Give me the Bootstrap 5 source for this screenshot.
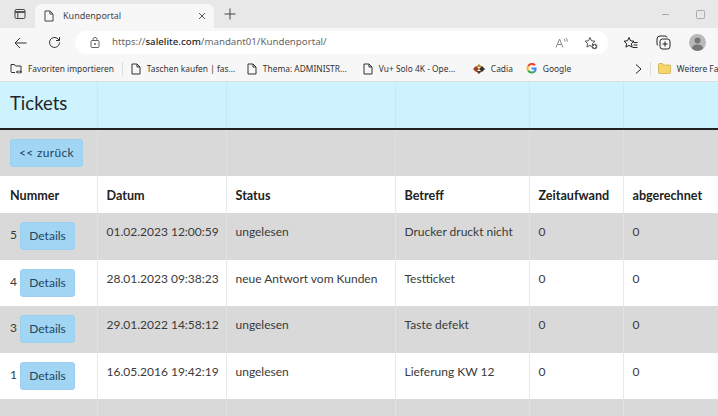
<!DOCTYPE html>
<html lang="de">
<head>
<meta charset="utf-8">
<title>Kundenportal</title>
<link href="https://cdn.jsdelivr.net/npm/bootstrap@5.3.0/dist/css/bootstrap.min.css" rel="stylesheet">
<style>
html,body{margin:0;height:416px;overflow:hidden;background:#fff}
body{font-family:"Noto Sans","Open Sans",sans-serif;font-size:11px;color:#333}
.tabstrip{height:28px;background:#e8e8e8;padding-left:9px}
.win-ico{width:22px;height:28px}
.tab-cell{width:179px;height:24px;margin:4px 0 0 4px;background:#f7f7f7;border-radius:6px 6px 0 0;padding:0 8px 0 9px;font-size:9px;color:#444}
.tab-title{margin-left:9px}
.plus{width:32px;height:28px}
.win-ctl{height:28px;gap:26px;padding-right:13px}
.toolbar{height:29px;background:#f7f7f7;padding:0 0 0 14px}
.navbtn{width:34px}
.addr{width:533px;height:23px;margin-left:14px;background:#fff;border-radius:12px;padding:0 10px 0 15px;font-size:9.7px;color:#666;white-space:nowrap}
.addr b{font-weight:500;color:#222}
.addr svg.lock{margin-right:12px}
.tool-right{gap:18px;margin-left:15px}
.avatar{width:17px;height:17px;border-radius:50%;background:#b9b9b9;overflow:hidden}
.favbar{height:25px;background:#f7f7f7;padding-left:10px;font-size:8.4px;color:#333;white-space:nowrap;border-bottom:1px solid #dedede;overflow:hidden}
.favbar>*{flex-shrink:0}
.fav{gap:6px}
.fav-sep{width:1px;height:14px;background:#ddd}
.fav-sep-start{margin:0 8px}
.fav-a{width:116px}
.fav-b{width:110px}
.fav-c{width:53px}
.fav-d{width:109px}
.fav-sep-end{margin:0 7px 0 8px}
.page-tbl{width:718px;table-layout:fixed;margin:0;font-family:Lato,"Noto Sans",sans-serif;font-size:12px;color:#3a3a3a;border-collapse:collapse;--bs-table-bg:transparent}
.page-tbl td,.page-tbl th{border:0;border-right:1px solid #e9e9e9;padding:10px 9px;vertical-align:top;line-height:18px;box-shadow:none;white-space:nowrap}
.page-tbl td:last-child,.page-tbl th:last-child{border-right:0}
.row-title td{height:47px;background:#cdf3fe;border-bottom:2px solid #222;padding:8px 10px;border-right-color:#c3ebf6}
.page-h{font-size:18.5px;font-weight:400;color:#212529;margin:0;line-height:26px}
.row-back td{height:47px;background:#d9d9d9;padding:9px 10px;border-right-color:#e0e0e0}
.page-tbl .row-head th{height:37px;background:#fff;color:#222;font-weight:700;font-size:12.6px;padding:11px 9px 8px}
.page-tbl .row-head th:first-child{padding-left:10px}
.row-grey td{height:46.500px;background:#d9d9d9;border-right-color:#e2e2e2}
.row-white td{height:46.500px;background:#fff}
.row-tail td{height:20px;background:#d9d9d9;border-right-color:#e2e2e2}
.page-tbl td.num{padding:9px 0 0 10px}
.btn-soft{background:#a0d5f3;border:1px solid #9bd0ee;color:#24455e;font-size:12px;line-height:18px;border-radius:3px}
.btn-soft:hover{background:#a0d5f3;color:#24455e}
.btn-det{padding:4px 0;width:55px;height:28px}
.btn-back{width:73px;height:28px;padding:4px 0;letter-spacing:.35px}
.c1{width:97px}.c2{width:129px}.c3{width:169px}.c4{width:134px}.c5{width:94px}.c6{width:95px}
</style>
</head>
<body>
<div class="tabstrip d-flex">
  <div class="win-ico d-flex align-items-center justify-content-center">
    <svg width="12" height="12" viewBox="0 0 12 12" fill="none" stroke="#444" stroke-width="1"><rect x="1" y="1.5" width="10" height="9" rx="1.2"/><path d="M1 4h10" stroke-width="1.8"/><path d="M3.8 4v6.5"/></svg>
  </div>
  <div class="tab-cell d-flex align-items-center">
    <svg width="10" height="12" viewBox="0 0 10 12" fill="none" stroke="#444"><path d="M1 1h5l3 3v7H1z M6 1v3h3"/></svg>
    <span class="tab-title flex-grow-1">Kundenportal</span>
    <svg width="8" height="8" viewBox="0 0 8 8" stroke="#555" fill="none"><path d="M1 1l6 6M7 1l-6 6"/></svg>
  </div>
  <div class="plus d-flex align-items-center justify-content-center">
    <svg width="12" height="12" viewBox="0 0 12 12" stroke="#444" fill="none"><path d="M6 .5v11M.5 6h11"/></svg>
  </div>
  <div class="flex-grow-1"></div>
  <div class="win-ctl d-flex align-items-center">
    <svg width="9" height="9" viewBox="0 0 9 9" stroke="#aaa" fill="none"><path d="M1 4.5h7"/></svg>
    <svg width="9" height="9" viewBox="0 0 9 9" stroke="#aaa" fill="none"><rect x=".5" y=".5" width="8" height="8" rx="1"/></svg>
  </div>
</div>
<div class="toolbar d-flex align-items-center">
  <div class="navbtn"><svg width="13" height="12" viewBox="0 0 13 12" stroke="#333" fill="none" class="d-block"><path d="M12.5 6H1M6 1L1 6l5 5"/></svg></div>
  <div><svg width="13" height="13" viewBox="0 0 13 13" stroke="#333" fill="none" class="d-block"><path d="M11.500 6.500a5 5 0 1 1-1.500-3.600L11.500 4.500M11.500 1v3.500H8"/></svg></div>
  <div class="addr d-flex align-items-center">
    <svg class="lock" width="10" height="11" viewBox="0 0 10 11" stroke="#666" fill="none"><rect x="1" y="3.500" width="8" height="7" rx="1"/><path d="M3 3.500V2.500a2 2 0 0 1 4 0v1"/><circle cx="5" cy="7" r=".6" fill="#666"/></svg>
    <span>https://<b>salelite.com</b>/mandant01/Kundenportal/</span>
    <span class="flex-grow-1"></span>
    <svg width="13" height="12" viewBox="0 0 13 12" stroke="#888" fill="none"><path d="M1 10.500L4.500 2 8 10.500M2.300 7.500h4.400M9 2a3 3 0 0 1 1 2.500M11 1a5 5 0 0 1 1.300 3.500"/></svg>
    <svg class="ms-3" width="14" height="14" viewBox="0 0 14 14" stroke="#555" fill="none"><path d="M6 1.500l1.500 3.300 3.500.4-2.600 2.400.7 3.500L6 9.400l-3.100 1.700.7-3.500L1 5.200l3.500-.4z"/><circle cx="10.500" cy="10.500" r="2.800" fill="#666" stroke="none"/><path d="M9 10.500h3M10.500 9v3" stroke="#fff"/></svg>
  </div>
  <div class="tool-right d-flex align-items-center">
    <svg width="15" height="14" viewBox="0 0 15 14" stroke="#222" fill="none"><path d="M6 1.500l1.500 3.300 3.500.4-2.600 2.400.7 3.500L6 9.400l-3.100 1.700.7-3.500L1 5.200l3.500-.4zM10.500 6.500h4M10.500 9h4M9.500 11.500h5"/></svg>
    <svg width="15" height="15" viewBox="0 0 15 15" stroke="#222" fill="none"><rect x="4" y="4" width="10" height="10" rx="2.500"/><path d="M9 6.500v5M6.500 9h5M2 10.500A2 2 0 0 1 1 9V4a3 3 0 0 1 3-3h5a2 2 0 0 1 2 1.500"/></svg>
    <div class="avatar"><svg width="17" height="17" viewBox="0 0 17 17" class="d-block" fill="#777"><circle cx="8.500" cy="6.500" r="3"/><ellipse cx="8.500" cy="14" rx="5.500" ry="3.500"/></svg></div>
  </div>
</div>
<div class="favbar d-flex align-items-center">
  <div class="fav d-flex align-items-center">
    <svg width="12" height="11" viewBox="0 0 12 11" stroke="#333" fill="none"><path d="M5 9.500H2a1 1 0 0 1-1-1v-7h3.500l1 1.500H11v6.500M6.500 9h4.500M8 7.500L6.500 9 8 10.500M10 7.500L11.500 9 10 10.500"/></svg>
    <span>Favoriten importieren</span>
  </div>
  <div class="fav-sep fav-sep-start"></div>
  <div class="fav fav-a d-flex align-items-center">
    <svg width="10" height="12" viewBox="0 0 10 12" fill="none" stroke="#333"><path d="M1 1h5l3 3v7H1z M6 1v3h3"/></svg>
    <span>Taschen kaufen | fas...</span>
  </div>
  <div class="fav fav-a d-flex align-items-center">
    <svg width="10" height="12" viewBox="0 0 10 12" fill="none" stroke="#333"><path d="M1 1h5l3 3v7H1z M6 1v3h3"/></svg>
    <span>Thema: ADMINISTR...</span>
  </div>
  <div class="fav fav-b d-flex align-items-center">
    <svg width="10" height="12" viewBox="0 0 10 12" fill="none" stroke="#333"><path d="M1 1h5l3 3v7H1z M6 1v3h3"/></svg>
    <span>Vu+ Solo 4K - Ope...</span>
  </div>
  <div class="fav fav-c d-flex align-items-center">
    <svg width="12" height="10" viewBox="0 0 12 10"><path d="M6 0l3 3H3z" fill="#c28a1c"/><path d="M6 10l3-3H3z" fill="#6b3a1a"/><path d="M0 5l3-3 3 3-3 3z" fill="#a33d1d"/><path d="M12 5L9 2 6 5l3 3z" fill="#333"/></svg>
    <span>Cadia</span>
  </div>
  <div class="fav fav-d d-flex align-items-center">
    <svg width="11" height="11" viewBox="0 0 11 11" fill="none" stroke-width="2"><path d="M9 2.200A4.200 4.200 0 0 0 2.200 3.200" stroke="#ea4335"/><path d="M2.200 3.200a4.200 4.200 0 0 0 0 4.400" stroke="#fbbc05"/><path d="M2.200 7.600A4.200 4.200 0 0 0 8.500 8.500" stroke="#34a853"/><path d="M8.500 8.500A4 4 0 0 0 9.600 5.500H5.500" stroke="#4285f4"/></svg>
    <span>Google</span>
  </div>
  <svg width="7" height="10" viewBox="0 0 7 10" stroke="#222" fill="none"><path d="M1 .5L6 5 1 9.500"/></svg>
  <div class="fav-sep fav-sep-end"></div>
  <div class="fav d-flex align-items-center">
    <svg width="13" height="11" viewBox="0 0 13 11"><path d="M.5 1.500a1 1 0 0 1 1-1h3l1 1.500h6a1 1 0 0 1 1 1v6.500a1 1 0 0 1-1 1h-10a1 1 0 0 1-1-1z" fill="#f6d66c" stroke="#c9a53a" stroke-width=".7"/></svg>
    <span>Weitere Fav</span>
  </div>
</div>
<table class="table page-tbl">
  <colgroup><col class="c1"><col class="c2"><col class="c3"><col class="c4"><col class="c5"><col class="c6"></colgroup>
  <tbody>
    <tr class="row-title"><td><h1 class="page-h">Tickets</h1></td><td></td><td></td><td></td><td></td><td></td></tr>
    <tr class="row-back"><td><a href="#" class="btn btn-soft btn-back">&lt;&lt; zurück</a></td><td></td><td></td><td></td><td></td><td></td></tr>
    <tr class="row-head"><th>Nummer</th><th>Datum</th><th>Status</th><th>Betreff</th><th>Zeitaufwand</th><th>abgerechnet</th></tr>
    <tr class="row-grey"><td class="num">5 <a href="#" class="btn btn-soft btn-det">Details</a></td><td>01.02.2023 12:00:59</td><td>ungelesen</td><td>Drucker druckt nicht</td><td>0</td><td>0</td></tr>
    <tr class="row-white"><td class="num">4 <a href="#" class="btn btn-soft btn-det">Details</a></td><td>28.01.2023 09:38:23</td><td>neue Antwort vom Kunden</td><td>Testticket</td><td>0</td><td>0</td></tr>
    <tr class="row-grey"><td class="num">3 <a href="#" class="btn btn-soft btn-det">Details</a></td><td>29.01.2022 14:58:12</td><td>ungelesen</td><td>Taste defekt</td><td>0</td><td>0</td></tr>
    <tr class="row-white"><td class="num">1 <a href="#" class="btn btn-soft btn-det">Details</a></td><td>16.05.2016 19:42:19</td><td>ungelesen</td><td>Lieferung KW 12</td><td>0</td><td>0</td></tr>
    <tr class="row-tail"><td></td><td></td><td></td><td></td><td></td><td></td></tr>
  </tbody>
</table>
<script src="https://cdn.jsdelivr.net/npm/bootstrap@5.3.0/dist/js/bootstrap.bundle.min.js"></script>
</body>
</html>
